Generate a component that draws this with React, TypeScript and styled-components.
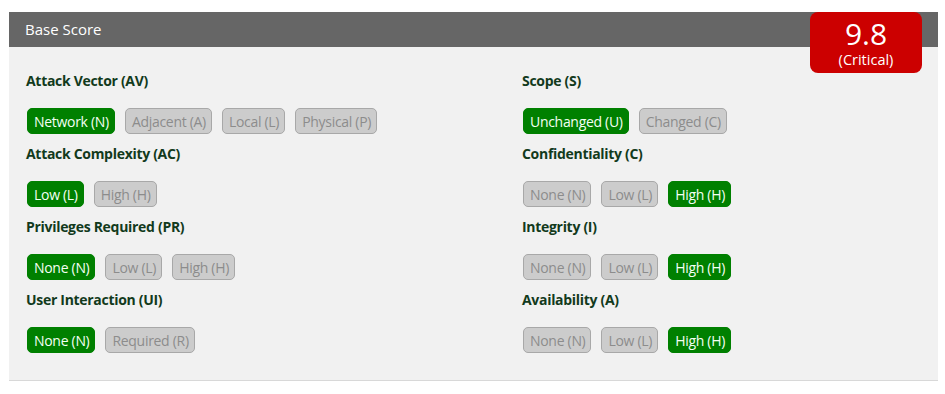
import styled, { createGlobalStyle } from "styled-components";

const Global = createGlobalStyle`
  body {
    margin: 0;
    background: #fff;
    font-family: "Open Sans", "Liberation Sans", sans-serif;
  }
`;

type Metric = {
  label: string;
  options: string[];
  selected: number;
};

const LEFT: Metric[] = [
  { label: "Attack Vector (AV)", options: ["Network (N)", "Adjacent (A)", "Local (L)", "Physical (P)"], selected: 0 },
  { label: "Attack Complexity (AC)", options: ["Low (L)", "High (H)"], selected: 0 },
  { label: "Privileges Required (PR)", options: ["None (N)", "Low (L)", "High (H)"], selected: 0 },
  { label: "User Interaction (UI)", options: ["None (N)", "Required (R)"], selected: 0 },
];

const RIGHT: Metric[] = [
  { label: "Scope (S)", options: ["Unchanged (U)", "Changed (C)"], selected: 0 },
  { label: "Confidentiality (C)", options: ["None (N)", "Low (L)", "High (H)"], selected: 2 },
  { label: "Integrity (I)", options: ["None (N)", "Low (L)", "High (H)"], selected: 2 },
  { label: "Availability (A)", options: ["None (N)", "Low (L)", "High (H)"], selected: 2 },
];

const App = () => {
  return (
    <>
      <Global />
      <Panel>
        <Header>Base Score</Header>
        <ScoreBadge>
          <ScoreValue>9.8</ScoreValue>
          <ScoreLabel>(Critical)</ScoreLabel>
        </ScoreBadge>
        <Body>
          <Column>
            {LEFT.map((m) => (
              <MetricGroup key={m.label} metric={m} />
            ))}
          </Column>
          <Column>
            {RIGHT.map((m) => (
              <MetricGroup key={m.label} metric={m} />
            ))}
          </Column>
        </Body>
      </Panel>
    </>
  );
};

const MetricGroup = ({ metric }: { metric: Metric }) => (
  <Group>
    <Heading>{metric.label}</Heading>
    <Options>
      {metric.options.map((o, i) => (
        <Option key={o} $active={i === metric.selected}>
          {o}
        </Option>
      ))}
    </Options>
  </Group>
);

export default App;

const Panel = styled.div`
  position: relative;
  margin: 12px 7px 0 9px;
  background: #f1f1f1;
  border-bottom: 1px solid #d8d8d8;
`;

const Header = styled.div`
  height: 35px;
  line-height: 35px;
  background: #666666;
  color: #fff;
  font-size: 15px;
  padding-left: 16px;
`;

const ScoreBadge = styled.div`
  position: absolute;
  top: 0;
  right: 16px;
  width: 112px;
  height: 61px;
  background: #cc0000;
  border-radius: 8px;
  color: #fff;
  display: flex;
  flex-direction: column;
  align-items: center;
  justify-content: center;
`;

const ScoreValue = styled.div`
  font-size: 30px;
  line-height: 34px;
`;

const ScoreLabel = styled.div`
  font-size: 14.5px;
  line-height: 18px;
`;

const Body = styled.div`
  display: grid;
  grid-template-columns: 496px 1fr;
  padding: 24px 17px 27px 17px;
`;

const Column = styled.div`
  display: flex;
  flex-direction: column;
  gap: 10px;
`;

const Group = styled.div`
  display: flex;
  flex-direction: column;
`;

const Heading = styled.div`
  font-size: 14px;
  font-weight: 700;
  letter-spacing: -0.3px;
  line-height: 20px;
  color: #123a1c;
  margin-bottom: 17px;
`;

const Options = styled.div`
  display: flex;
  gap: 10px;
  padding-left: 1px;
`;

const Option = styled.span<{ $active: boolean }>`
  display: inline-flex;
  align-items: center;
  box-sizing: border-box;
  height: 26px;
  padding: 0 5px 0 6px;
  font-size: 14px;
  letter-spacing: -0.3px;
  border-radius: 5px;
  border: 1px solid ${(p) => (p.$active ? "#008000" : "#a8a8a8")};
  background: ${(p) => (p.$active ? "#008000" : "#cccccc")};
  color: ${(p) => (p.$active ? "#f4fff4" : "#8c8c8c")};
`;
